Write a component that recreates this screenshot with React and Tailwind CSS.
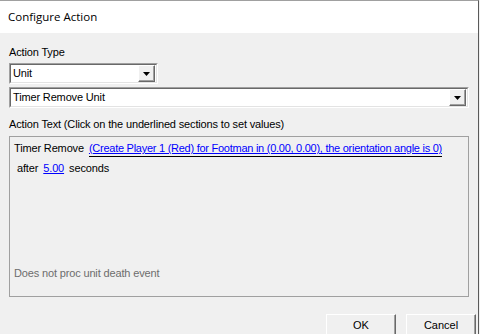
import React from 'react';

const font = { fontFamily: '"Liberation Sans", Arial, sans-serif' };

function Arrow() {
  return (
    <div className="w-[17px] h-[17px] flex-shrink-0 bg-[#f0f0f0] border border-t-white border-l-white border-b-[#696969] border-r-[#696969] shadow-[inset_-1px_-1px_0_#a0a0a0] flex items-center justify-center">
      <svg width="7" height="4" viewBox="0 0 7 4">
        <path d="M0 0h7L3.5 4z" fill="#000" />
      </svg>
    </div>
  );
}

function Combo({ value, className }) {
  return (
    <div className={`h-[21px] flex items-center bg-white border border-t-[#a0a0a0] border-l-[#a0a0a0] border-b-white border-r-white ${className}`}>
      <div className="flex-1 h-full flex items-center border border-t-[#696969] border-l-[#696969] border-b-[#e3e3e3] border-r-[#e3e3e3] pl-[2px] pr-px">
        <span className="flex-1 text-[11px] text-black leading-none">{value}</span>
        <Arrow />
      </div>
    </div>
  );
}

function Button({ children }) {
  return (
    <button className="w-[70px] h-[22px] text-[11px] leading-none pt-[1px] text-black bg-[#f0f0f0] border border-t-white border-l-white border-b-[#696969] border-r-[#696969] shadow-[inset_-1px_-1px_0_#a0a0a0]">
      {children}
    </button>
  );
}

export default function App() {
  return (
    <div className="w-[480px] h-[334px] overflow-hidden bg-[#f0f0f0]" style={font}>
      <div className="w-[479px] h-[334px] flex flex-col border-t border-t-[#a0a0a0] border-r border-r-[#5a5a5a] bg-[#f0f0f0]">

        {/* Title bar */}
        <div className="h-[32px] bg-white flex items-center pl-[8px] flex-shrink-0">
          <span className="text-[11.5px] text-black" style={{ fontFamily: '"Open Sans", "Noto Sans", sans-serif' }}>Configure Action</span>
        </div>

        {/* Body */}
        <div className="flex flex-col pl-[9px] pr-[10px] tracking-[-0.15px]">
          <p className="text-[11px] text-black mt-[14px] leading-none">Action Type</p>
          <Combo value="Unit" className="w-[149px] mt-[5px]" />
          <Combo value="Timer Remove Unit" className="w-[460px] mt-[3px]" />
          <p className="text-[11px] text-black mt-[11px] leading-none">Action Text (Click on the underlined sections to set values)</p>

          <div className="w-[460px] h-[161px] mt-[6px] border border-[#a0a0a0] flex flex-col pl-[4px] pt-[6px] text-[11px] leading-none text-black">
            <div className="flex items-start">
              <span>Timer Remove</span>
              <span className="ml-[5px] pb-[2px] border-b border-black">
                <span className="text-[#0000ff] underline decoration-[#0000ff] tracking-[-0.26px]">(Create Player 1 (Red) for Footman in (0.00, 0.00), the orientation angle is 0)</span>
              </span>
            </div>
            <div className="flex items-start mt-[6px] pl-[3px]">
              <span>after</span>
              <span className="ml-[5px] text-[#0000ff] underline decoration-[#0000ff]">5.00</span>
              <span className="ml-[5px]">seconds</span>
            </div>
            <div className="flex-1" />
            <p className="text-[#6d6d6d] mb-[17px]">Does not proc unit death event</p>
          </div>
        </div>

        {/* Buttons */}
        <div className="flex justify-end gap-[10px] mt-[17px] pr-[2px]">
          <Button>OK</Button>
          <Button>Cancel</Button>
        </div>
      </div>
    </div>
  );
}
